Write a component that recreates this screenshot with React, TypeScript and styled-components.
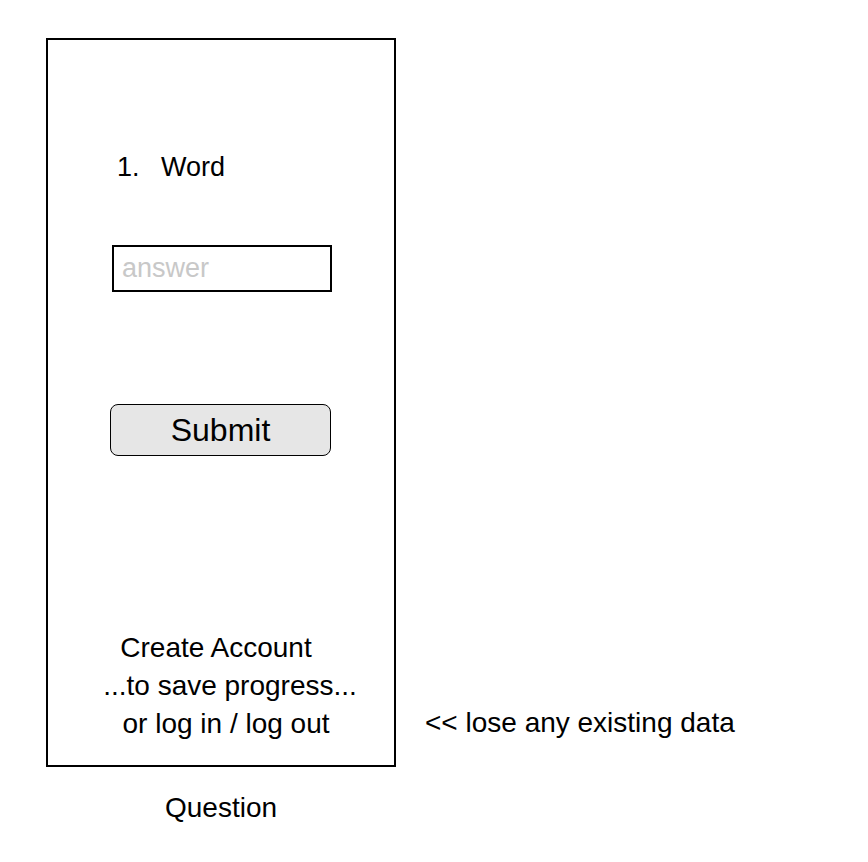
import React from 'react';
import styled, { createGlobalStyle } from 'styled-components';

const GlobalStyle = createGlobalStyle`
  html, body {
    margin: 0;
    padding: 0;
    background: #ffffff;
  }
  body {
    font-family: "Liberation Sans", Arial, Helvetica, sans-serif;
    color: #000;
  }
`;

const Page = styled.div`
  width: 868px;
  height: 862px;
  box-sizing: border-box;
  padding: 38px 0 0 46px;
  display: grid;
  grid-template-columns: 350px auto;
  grid-template-rows: 729px auto;
  column-gap: 29px;
`;

// the phone-shaped frame of the mockup
const Frame = styled.div`
  box-sizing: border-box;
  border: 2px solid #000;
  display: flex;
  flex-direction: column;
  padding: 111px 0 0 0;
`;

const QuestionRow = styled.div`
  display: flex;
  font-size: 27px;
  line-height: 32px;
  padding-left: 69px;
`;

const Number = styled.span`
  width: 44px;
`;

const AnswerInput = styled.input`
  box-sizing: border-box;
  width: 220px;
  height: 47px;
  margin: 62px 0 0 64px;
  padding: 0 8px;
  border: 2px solid #000;
  border-radius: 0;
  font-family: "Liberation Sans", Arial, sans-serif;
  font-size: 27px;
  color: #000;
  outline: none;

  &::placeholder {
    color: #c8c8c8;
  }
`;

const SubmitButton = styled.button`
  box-sizing: border-box;
  width: 221px;
  height: 52px;
  margin: 112px 0 0 62px;
  background: #e6e6e6;
  border: 1.5px solid #000;
  border-radius: 8px;
  font-family: "Liberation Sans", Arial, sans-serif;
  font-size: 32px;
  color: #000;
  cursor: pointer;
`;

const AccountBlock = styled.div`
  margin-top: auto;
  padding-bottom: 22px;
  display: flex;
  flex-direction: column;
  align-items: center;
  font-size: 28px;
  line-height: 38px;
`;

const AccountLine = styled.span<{ $nudge?: number }>`
  margin-left: ${(p) => (p.$nudge ?? 0) * 2}px;
  white-space: nowrap;
`;

const Note = styled.div`
  align-self: end;
  margin-bottom: 27px;
  font-size: 28px;
  line-height: 34px;
  white-space: nowrap;
`;

const Caption = styled.div`
  text-align: center;
  font-size: 28px;
  line-height: 34px;
  padding-top: 24px;
`;

const App: React.FC = () => {
  return (
    <>
      <GlobalStyle />
      <Page>
        <Frame>
          <QuestionRow>
            <Number>1.</Number>
            <span>Word</span>
          </QuestionRow>
          <AnswerInput type="text" placeholder="answer" />
          <SubmitButton>Submit</SubmitButton>
          <AccountBlock>
            <AccountLine $nudge={-5}>Create Account</AccountLine>
            <AccountLine $nudge={9}>...to save progress...</AccountLine>
            <AccountLine $nudge={5}>or log in / log out</AccountLine>
          </AccountBlock>
        </Frame>
        <Note>&lt;&lt; lose any existing data</Note>
        <Caption>Question</Caption>
      </Page>
    </>
  );
};

export default App;
